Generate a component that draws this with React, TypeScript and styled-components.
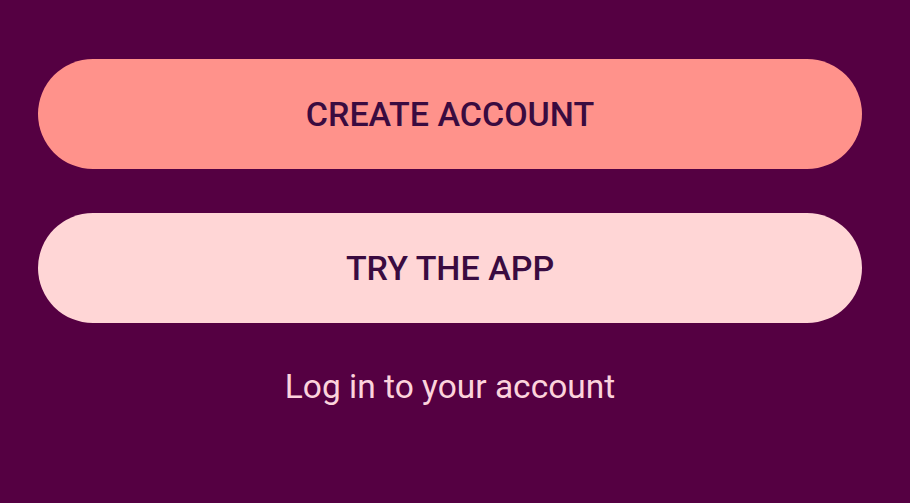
import React from 'react'
import styled, { createGlobalStyle } from 'styled-components'

const GlobalStyle = createGlobalStyle`
  html, body {
    margin: 0;
    padding: 0;
    background: #550042;
  }
  body {
    font-family: Roboto, "Liberation Sans", sans-serif;
  }
`

type Variant = 'primary' | 'secondary'

function App() {
  return (
    <>
      <GlobalStyle />
      <Container>
        <PillButton variant={'primary'}>CREATE ACCOUNT</PillButton>
        <PillButton variant={'secondary'}>TRY THE APP</PillButton>
        <LoginLink href={'#'}>Log in to your account</LoginLink>
      </Container>
    </>
  )
}

const Container = styled.div`
  width: 100%;
  height: 503px;
  box-sizing: border-box;
  padding: 59px 48px 0 38px;
  display: flex;
  flex-direction: column;
  align-items: stretch;
  background: #550042;
`

const PillButton = styled.button<{ variant: Variant }>`
  height: 110px;
  margin-bottom: 44px;
  border: none;
  border-radius: 55px;
  display: flex;
  justify-content: center;
  align-items: center;
  font-family: Roboto, "Liberation Sans", sans-serif;
  font-weight: 500;
  font-size: 34px;
  color: #3a0b40;
  cursor: pointer;
  background: ${(props) => (props.variant === 'primary' ? '#ff928b' : '#ffd6d6')};
`

const LoginLink = styled.a`
  align-self: center;
  margin-top: 0;
  font-family: Roboto, "Liberation Sans", sans-serif;
  font-size: 33.5px;
  line-height: 40px;
  color: #fcd3dc;
  text-decoration: none;
`

export default App
